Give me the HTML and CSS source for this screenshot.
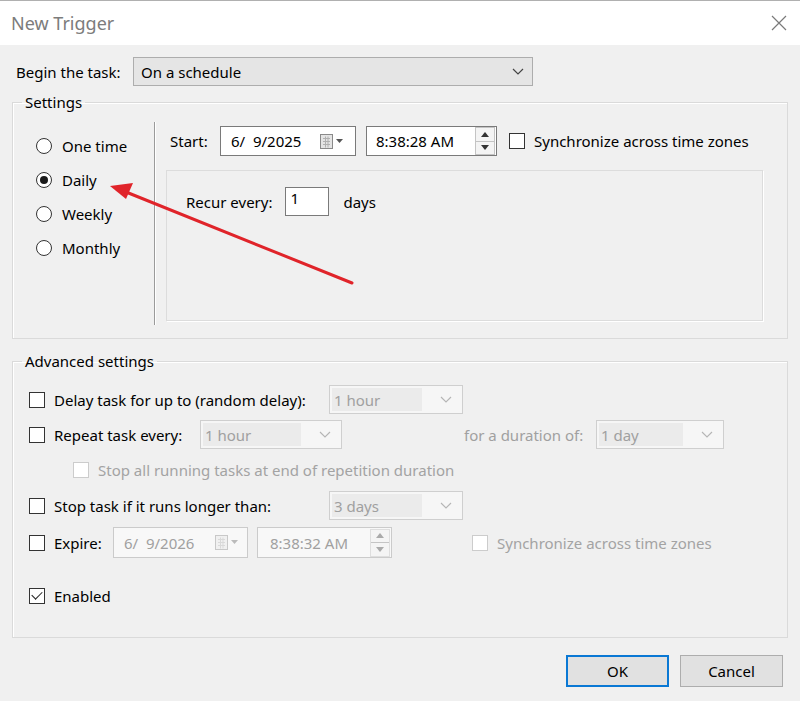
FILE: index.html
```html
<!DOCTYPE html>
<html lang="en">
<head>
    <meta charset="UTF-8">
    <meta name="viewport" content="width=device-width, initial-scale=1.0">
    <title>New Trigger</title>
    <link rel="stylesheet" href="styles.css">
</head>
<body>
    <div class="window">
        <!-- Title bar -->
        <div class="titlebar">
            <span class="title">New Trigger</span>
            <svg class="close" width="16" height="16" viewBox="0 0 16 16">
                <path d="M1 1 L15 15 M15 1 L1 15" stroke="#7a7a7a" stroke-width="1.2" fill="none"/>
            </svg>
        </div>

        <div class="content">
            <div class="begin-row">
                <span class="begin-label">Begin the task:</span>
                <div class="combo main-combo">
                    <span>On a schedule</span>
                    <svg class="chevron" width="12" height="7" viewBox="0 0 12 7">
                        <polyline points="1,1 6,6 11,1" stroke="#444" stroke-width="1.2" fill="none"/>
                    </svg>
                </div>
            </div>

            <!-- Settings group -->
            <fieldset class="group settings">
                <legend>Settings</legend>
                <div class="settings-body">
                    <div class="kinds">
                        <label class="radio"><span class="circle"></span>One time</label>
                        <label class="radio checked"><span class="circle"></span>Daily</label>
                        <label class="radio"><span class="circle"></span>Weekly</label>
                        <label class="radio"><span class="circle"></span>Monthly</label>
                    </div>
                    <div class="divider"></div>
                    <div class="detail">
                        <div class="start-row">
                            <span class="start-label">Start:</span>
                            <div class="field date-field">
                                <span class="value">6/  9/2025</span>
                                <svg class="cal" width="24" height="15" viewBox="0 0 24 15">
                                    <rect x="0.5" y="0.5" width="12" height="14" fill="#e4e4e4" stroke="#8a8a8a"/>
                                    <path d="M3 4.5h7M3 7.5h7M3 10.5h7M5.5 2.5v11M8 2.5v11" stroke="#b0b0b0" stroke-width="1"/>
                                    <polygon points="16,5 23,5 19.5,9" fill="#555"/>
                                </svg>
                            </div>
                            <div class="field time-field">
                                <span class="value">8:38:28 AM</span>
                                <div class="spin">
                                    <span class="up"></span>
                                    <span class="down"></span>
                                </div>
                            </div>
                            <label class="check"><span class="box"></span>Synchronize across time zones</label>
                        </div>
                        <div class="recur-panel">
                            <div class="recur-row">
                                <span>Recur every:</span>
                                <div class="field num-field">1</div>
                                <span class="days">days</span>
                            </div>
                        </div>
                    </div>
                </div>
            </fieldset>

            <!-- Advanced settings group -->
            <fieldset class="group advanced">
                <legend>Advanced settings</legend>
                <div class="adv-body">
                    <div class="adv-row">
                        <label class="check"><span class="box"></span><span class="lbl w-long">Delay task for up to (random delay):</span></label>
                        <div class="combo off w-134"><span class="text">1 hour</span><svg class="chevron" width="12" height="7" viewBox="0 0 12 7"><polyline points="1,1 6,6 11,1" stroke="#b5b5b5" stroke-width="1.1" fill="none"/></svg></div>
                    </div>
                    <div class="adv-row">
                        <label class="check"><span class="box"></span><span class="lbl w-repeat">Repeat task every:</span></label>
                        <div class="combo off w-142"><span class="text">1 hour</span><svg class="chevron" width="12" height="7" viewBox="0 0 12 7"><polyline points="1,1 6,6 11,1" stroke="#b5b5b5" stroke-width="1.1" fill="none"/></svg></div>
                        <span class="muted duration-label">for a duration of:</span>
                        <div class="combo off w-128"><span class="text">1 day</span><svg class="chevron" width="12" height="7" viewBox="0 0 12 7"><polyline points="1,1 6,6 11,1" stroke="#b5b5b5" stroke-width="1.1" fill="none"/></svg></div>
                    </div>
                    <div class="adv-row">
                        <label class="check disabled indent"><span class="box"></span>Stop all running tasks at end of repetition duration</label>
                    </div>
                    <div class="adv-row tall">
                        <label class="check"><span class="box"></span><span class="lbl w-long">Stop task if it runs longer than:</span></label>
                        <div class="combo off w-134"><span class="text">3 days</span><svg class="chevron" width="12" height="7" viewBox="0 0 12 7"><polyline points="1,1 6,6 11,1" stroke="#b5b5b5" stroke-width="1.1" fill="none"/></svg></div>
                    </div>
                    <div class="adv-row tall">
                        <label class="check"><span class="box"></span><span class="lbl w-expire">Expire:</span></label>
                        <div class="field off date-field">
                            <span class="value">6/  9/2026</span>
                            <svg class="cal" width="24" height="15" viewBox="0 0 24 15">
                                <rect x="0.5" y="0.5" width="12" height="14" fill="#f0f0f0" stroke="#c8c8c8"/>
                                <path d="M3 4.5h7M3 7.5h7M3 10.5h7M5.5 2.5v11M8 2.5v11" stroke="#d9d9d9" stroke-width="1"/>
                                <polygon points="16,5 23,5 19.5,9" fill="#bbb"/>
                            </svg>
                        </div>
                        <div class="field off time-field">
                            <span class="value">8:38:32 AM</span>
                            <div class="spin">
                                <span class="up"></span>
                                <span class="down"></span>
                            </div>
                        </div>
                        <label class="check disabled expire-sync"><span class="box"></span>Synchronize across time zones</label>
                    </div>
                    <div class="adv-row enabled-row">
                        <label class="check checked"><span class="box"></span>Enabled</label>
                    </div>
                </div>
            </fieldset>

            <div class="buttons">
                <button class="btn default">OK</button>
                <button class="btn">Cancel</button>
            </div>
        </div>

        <!-- red annotation arrow -->
        <svg class="annotation" width="800" height="701" viewBox="0 0 800 701">
            <line x1="352" y1="283" x2="126" y2="192" stroke="#e0242a" stroke-width="3" stroke-linecap="round"/>
            <polygon points="110,186 133,183 126,199" fill="#e0242a"/>
        </svg>
    </div>
</body>
</html>
```

FILE: styles.css
```css
body {
    margin: 0;
    background-color: #f0f0f0;
    font-family: "Noto Sans", "Open Sans", sans-serif;
    font-size: 15px;
    color: #000;
}

.window {
    position: relative;
    width: 800px;
    height: 701px;
    overflow: hidden;
}

.titlebar {
    height: 44px;
    border-top: 1px solid #b0b0b0;
    background: #fff;
    display: flex;
    align-items: center;
    justify-content: space-between;
    padding: 0 13px 0 11px;
}

.title {
    font-size: 18px;
    color: #7c7c7c;
}

.content {
    padding-top: 12px;
}

.begin-row {
    display: flex;
    align-items: center;
    padding-left: 16px;
}

.begin-label {
    width: 117px;
}

.combo {
    display: flex;
    align-items: center;
    justify-content: space-between;
    box-sizing: border-box;
    height: 29px;
    padding: 0 8px 0 7px;
}

.main-combo {
    width: 400px;
    background: #e5e5e5;
    border: 1px solid #adadad;
}

.combo.off {
    background: #f6f6f6;
    border: 1px solid #cfcfcf;
    padding: 2px 10px 2px 2px;
    color: #a0a0a0;
}

.combo.off .text {
    flex: 1;
    align-self: stretch;
    display: flex;
    align-items: center;
    background: #ebebeb;
    margin-right: 18px;
    padding-left: 2px;
}

.w-134 { width: 134px; }
.w-142 { width: 142px; }
.w-128 { width: 128px; }

/* group boxes */
.group {
    margin: 6px 12px 0;
    padding: 0;
    border: 1px solid #dadada;
    box-shadow: inset 1px 1px 0 #fff;
}

.group legend {
    margin-left: 9px;
    padding: 0 3px;
    line-height: 20px;
}

.settings-body {
    display: flex;
    height: 203px;
    padding: 10px 0 13px;
}

.kinds {
    width: 118px;
    padding: 7px 0 0 23px;
    display: flex;
    flex-direction: column;
}

.radio {
    display: flex;
    align-items: center;
    height: 34px;
    gap: 10px;
}

.radio .circle {
    width: 14px;
    height: 14px;
    border: 1px solid #333;
    border-radius: 50%;
    background: #fff;
    display: flex;
    align-items: center;
    justify-content: center;
}

.radio.checked .circle::after {
    content: "";
    width: 8px;
    height: 8px;
    border-radius: 50%;
    background: #1a1a1a;
}

.divider {
    width: 1px;
    background: #9a9a9a;
    border-right: 1px solid #fff;
}

.detail {
    flex: 1;
    padding: 4px 24px 4px 10px;
    display: flex;
    flex-direction: column;
}

.start-row {
    display: flex;
    align-items: center;
}

.start-label {
    margin-left: 4px;
    width: 50px;
}

.field {
    box-sizing: border-box;
    height: 30px;
    border: 1px solid #7a7a7a;
    background: #fff;
    display: flex;
    align-items: center;
    justify-content: space-between;
}

.value {
    white-space: pre;
}

.date-field {
    width: 136px;
    padding: 0 11px 0 10px;
}

.time-field {
    width: 131px;
    margin-left: 10px;
    padding: 0 1px 0 9px;
}

.field.off {
    border-color: #cbcbcb;
    color: #a0a0a0;
    background: #f8f8f8;
    height: 31px;
}

.field.off.date-field {
    width: 135px;
    padding: 0 8px 0 10px;
}

.field.off.time-field {
    width: 135px;
    margin-left: 9px;
    padding-left: 12px;
}

.spin {
    width: 18px;
    height: 26px;
    border: 1px solid #c4c4c4;
    background: #f4f4f4;
    display: flex;
    flex-direction: column;
}

.spin span {
    flex: 1;
    display: flex;
    align-items: center;
    justify-content: center;
}

.spin .up {
    border-bottom: 1px solid #c4c4c4;
}

.spin .up::after {
    content: "";
    border: 4px solid transparent;
    border-top: 0;
    border-bottom: 5px solid #333;
}

.spin .down::after {
    content: "";
    border: 4px solid transparent;
    border-bottom: 0;
    border-top: 5px solid #333;
}

.field.off .spin {
    border-color: #dedede;
}

.field.off .spin .up::after {
    border-bottom-color: #aaa;
}

.field.off .spin .down::after {
    border-top-color: #aaa;
}

.check {
    display: flex;
    align-items: center;
}

.check .box {
    box-sizing: border-box;
    width: 16px;
    height: 16px;
    border: 1px solid #333;
    background: #fff;
    margin-right: 9px;
    display: flex;
    align-items: center;
    justify-content: center;
}

.start-row .check {
    margin-left: 12px;
}

.check.checked .box::after {
    content: "";
    width: 9px;
    height: 5px;
    border-left: 1.5px solid #222;
    border-bottom: 1.5px solid #222;
    transform: translateY(-2px) rotate(-45deg);
}

.check.disabled {
    color: #a3a3a3;
}

.check.disabled .box {
    border-color: #cccccc;
}

.recur-panel {
    margin-top: 14px;
    flex: 1;
    border: 1px solid #dcdcdc;
    box-shadow: 1px 1px 0 #fff;
    padding: 16px 0 0 19px;
}

.recur-row {
    display: flex;
    align-items: center;
}

.num-field {
    width: 44px;
    height: 29px;
    margin-left: 13px;
    padding-left: 4px;
    justify-content: flex-start;
    align-items: flex-start;
}

.days {
    margin-left: 14px;
}

/* advanced */
.advanced {
    margin-top: 12px;
}

.adv-body {
    padding: 11px 0 24px 16px;
}

.adv-row {
    display: flex;
    align-items: center;
    height: 35px;
}

.adv-row.tall {
    height: 37px;
}

.lbl.w-long { width: 275px; }
.lbl.w-repeat { width: 146px; }
.lbl.w-expire { width: 59px; }

.muted {
    color: #a0a0a0;
}

.duration-label {
    margin-left: 122px;
    width: 132px;
}

.indent {
    margin-left: 44px;
}

.expire-sync {
    margin-left: 80px;
}

.enabled-row {
    margin-top: 17px;
}

.buttons {
    display: flex;
    justify-content: flex-end;
    gap: 11px;
    padding: 17px 17px 0 0;
}

.btn {
    box-sizing: border-box;
    width: 103px;
    height: 32px;
    font-family: inherit;
    font-size: 15px;
    background: #e1e1e1;
    border: 1px solid #adadad;
    padding: 0;
}

.btn.default {
    border: 2px solid #0a78d4;
}

.annotation {
    position: absolute;
    left: 0;
    top: 0;
    pointer-events: none;
}
```
